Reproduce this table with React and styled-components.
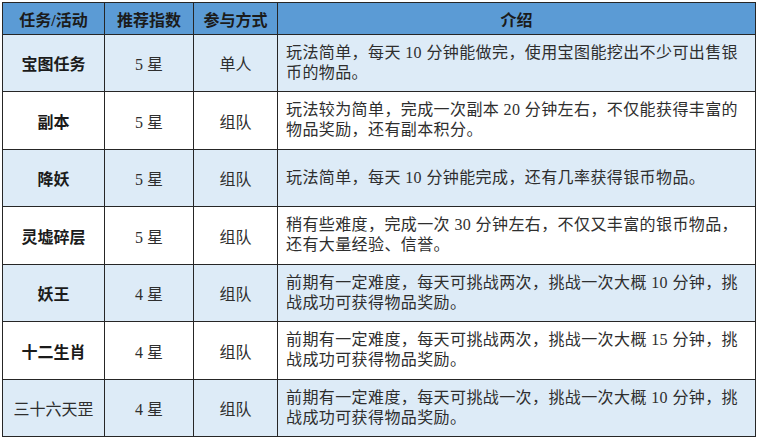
import React from "react";
import styled, { createGlobalStyle } from "styled-components";

const Global = createGlobalStyle`
  html, body { margin: 0; padding: 0; background: #ffffff; }
  body { padding: 2px; font-family: "Liberation Serif", "Noto Sans CJK SC", serif; }
`;

const Table = styled.table`
  border-collapse: collapse;
  table-layout: fixed;
  width: 753px;
  border: 1.5px solid #262626;
`;

const Col = styled.col`
  width: ${(p) => p.$w}px;
`;

const HeadCell = styled.th`
  height: 31px;
  padding: 0;
  background: #5b9bd5;
  border: 1px solid #262626;
  border-bottom: 1.5px solid #262626;
  font-family: "Liberation Serif", "Noto Sans CJK SC", serif;
  font-weight: 700;
  font-size: 16px;
  color: #1b1b1b;
  text-align: center;
  vertical-align: middle;
`;

const Row = styled.tr`
  height: ${(p) => p.$h}px;
  background: ${(p) => (p.$shade ? "#ddebf7" : "#ffffff")};
`;

const Cell = styled.td`
  padding: 0;
  border: 1px solid #262626;
  font-size: 16px;
  color: ${(p) => (p.$bold ? "#1b1b1b" : "#2e2e2e")};
  text-align: center;
  vertical-align: middle;
  font-weight: ${(p) => (p.$bold ? 700 : 400)};
  font-family: "Liberation Serif", "Noto Sans CJK SC", serif;
`;

const DescCell = styled.td`
  padding: 0 6px 1px 8px;
  border: 1px solid #262626;
  font-size: 16px;
  line-height: 20px;
  color: #2e2e2e;
  text-align: left;
  vertical-align: middle;
  font-family: "Liberation Serif", "Noto Sans CJK SC", serif;
`;

const Line = styled.div`
  white-space: nowrap;
  letter-spacing: 0.4px;
`;

const rows = [
  {
    name: "宝图任务",
    stars: "5 星",
    mode: "单人",
    desc: ["玩法简单，每天 10 分钟能做完，使用宝图能挖出不少可出售银", "币的物品。"],
  },
  {
    name: "副本",
    stars: "5 星",
    mode: "组队",
    desc: ["玩法较为简单，完成一次副本 20 分钟左右，不仅能获得丰富的", "物品奖励，还有副本积分。"],
  },
  {
    name: "降妖",
    stars: "5 星",
    mode: "组队",
    desc: ["玩法简单，每天 10 分钟能完成，还有几率获得银币物品。"],
  },
  {
    name: "灵墟碎层",
    stars: "5 星",
    mode: "组队",
    desc: ["稍有些难度，完成一次 30 分钟左右，不仅又丰富的银币物品，", "还有大量经验、信誉。"],
  },
  {
    name: "妖王",
    stars: "4 星",
    mode: "组队",
    desc: ["前期有一定难度，每天可挑战两次，挑战一次大概 10 分钟，挑", "战成功可获得物品奖励。"],
  },
  {
    name: "十二生肖",
    stars: "4 星",
    mode: "组队",
    desc: ["前期有一定难度，每天可挑战两次，挑战一次大概 15 分钟，挑", "战成功可获得物品奖励。"],
  },
  {
    name: "三十六天罡",
    stars: "4 星",
    mode: "组队",
    desc: ["前期有一定难度，每天可挑战一次，挑战一次大概 10 分钟，挑", "战成功可获得物品奖励。"],
    plain: true,
  },
];

export default function App() {
  return (
    <>
      <Global />
      <Table>
        <colgroup>
          <Col $w={102} />
          <Col $w={89} />
          <Col $w={84} />
          <Col $w={478} />
        </colgroup>
        <thead>
          <tr>
            <HeadCell>任务/活动</HeadCell>
            <HeadCell>推荐指数</HeadCell>
            <HeadCell>参与方式</HeadCell>
            <HeadCell>介绍</HeadCell>
          </tr>
        </thead>
        <tbody>
          {rows.map((r, i) => (
            <Row key={r.name} $shade={i % 2 === 0} $h={i % 2 === 0 ? 57 : 58}>
              <Cell $bold={!r.plain}>{r.name}</Cell>
              <Cell>{r.stars}</Cell>
              <Cell>{r.mode}</Cell>
              <DescCell>
                {r.desc.map((l) => (
                  <Line key={l}>{l}</Line>
                ))}
              </DescCell>
            </Row>
          ))}
        </tbody>
      </Table>
    </>
  );
}
